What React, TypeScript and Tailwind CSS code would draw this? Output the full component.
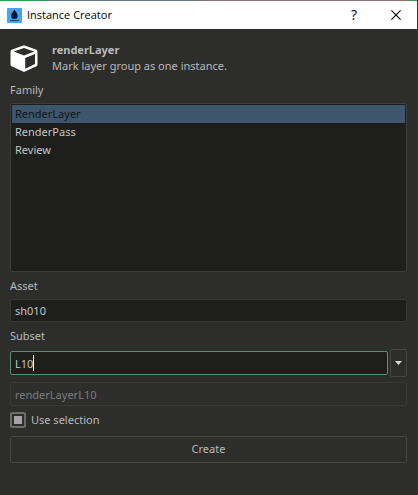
import { useState } from "react";

function AppIcon() {
  return (
    <svg className="size-[15px] shrink-0" viewBox="0 0 15 15" aria-hidden="true">
      <rect width="15" height="15" rx="1" fill="#4aa3ee" />
      <path d="M7.4 1.6C6.6 3.4 4.2 5 4.2 7.8c0 1.3.5 2.3 1.3 3h3.8c.8-.7 1.3-1.7 1.3-3C10.6 5 8.2 3.4 7.4 1.6z" fill="#0b1622" />
      <path d="M3 12.5h9" stroke="#17456f" strokeWidth="1" />
    </svg>
  );
}

function CubeIcon() {
  return (
    <svg className="h-[27px] w-7 shrink-0" viewBox="0 0 28 27" aria-hidden="true">
      <path
        fillRule="evenodd"
        d="M14 .3 26.4 4.7Q27.5 5.2 27.5 6.4V19.6Q27.5 20.7 26.5 21.3L15 26.6Q14 27 13 26.6L1.5 21.3Q.5 20.7.5 19.6V6.4Q.5 5.2 1.6 4.7ZM14 3 3.8 6.4 14 10.5 24.2 6.4ZM15.2 13V23.7L25 19.1V9Z"
        fill="#fff"
      />
    </svg>
  );
}

const field =
  "block w-full min-w-0 rounded-xs border px-1 text-[11px] outline-none";

export default function App() {
  const [family, setFamily] = useState("RenderLayer");
  const [asset, setAsset] = useState("sh010");
  const [subset, setSubset] = useState("L10");

  return (
    <div className="flex min-h-screen flex-col border-r border-[#3a3637] bg-[#2d2d2b] font-['Noto_Sans','Open_Sans',sans-serif] text-[11px] text-[#b9babb]">
      <div className="flex h-px">
        <div className="w-11 bg-[#2f9e49]" />
        <div className="flex-1 bg-[#66757f]" />
        <div className="w-1/2 bg-[#8c7378]" />
        <div className="w-2 bg-[#2f9e49]" />
      </div>
      <header className="flex h-7 items-center bg-white pl-[7px] text-black">
        <AppIcon />
        <h1 className="ml-[5px] flex-1 font-['Open_Sans',sans-serif]">Instance Creator</h1>
        <button type="button" aria-label="Help" className="flex h-7 w-[42px] items-center justify-center font-['Open_Sans',sans-serif] text-sm">
          ?
        </button>
        <button type="button" aria-label="Close" className="flex h-7 w-[42px] items-center justify-center">
          <svg className="size-[10px]" viewBox="0 0 10 10" aria-hidden="true">
            <path d="M.4.4 9.6 9.6M9.6.4.4 9.6" stroke="#000" strokeWidth="1.1" />
          </svg>
        </button>
      </header>

      <main className="flex flex-col px-[10px] pt-3">
        <div className="flex items-center gap-[14px] pt-px">
          <CubeIcon />
          <div className="leading-4">
            <h2 className="font-bold">renderLayer</h2>
            <p>Mark layer group as one instance.</p>
          </div>
        </div>

        <label htmlFor="family" className="mt-[7px] leading-[18px]">Family</label>
        <select
          id="family"
          size={9}
          value={family}
          onChange={(e) => setFamily(e.target.value)}
          className="mt-1 block h-[169px] w-full appearance-none overflow-hidden rounded-xs border border-[#3b3d3e] bg-[#1e1e1c] p-px text-[11px] text-[#c4c5c6] outline-none"
        >
          {["RenderLayer", "RenderPass", "Review"].map((name) => (
            <option
              key={name}
              className="h-[18px] min-h-[18px] px-[3px] pt-px pb-0 leading-[18px] checked:bg-[#3d566d] checked:bg-linear-to-r checked:from-[#3d566d] checked:to-[#3d566d] checked:text-[#10151b]"
            >
              {name}
            </option>
          ))}
        </select>

        <label htmlFor="asset" className="mt-[5px] leading-[18px]">Asset</label>
        <input
          id="asset"
          value={asset}
          onChange={(e) => setAsset(e.target.value)}
          className={`${field} mt-1 h-[23px] border-[#373839] bg-[#1e1e1c] text-[#c4c5c6]`}
        />

        <label htmlFor="subset" className="mt-[5px] leading-[18px]">Subset</label>
        <div className="mt-1 flex items-center gap-[2px]">
          <div className="relative min-w-0 flex-1">
            <input
              id="subset"
              value={subset}
              onChange={(e) => setSubset(e.target.value)}
              className={`${field} h-6 border-[#5f8a78] bg-[#1e1e1c] text-[#c4c5c6] caret-transparent`}
            />
            <span className="absolute top-1 left-[23px] h-4 w-px bg-white" />
          </div>
          <button
            type="button"
            aria-label="Choose subset"
            className="flex h-7 w-[17px] items-center justify-center rounded-xs border border-[#434546]"
          >
            <svg className="h-1 w-[7px]" viewBox="0 0 7 4" aria-hidden="true">
              <path d="M0 0h7L3.5 4z" fill="#d5d6d7" />
            </svg>
          </button>
        </div>
        <input
          aria-label="Result name"
          value="renderLayerL10"
          disabled
          className={`${field} mt-[5px] h-6 border-[#383939] bg-[#2d2d2b] text-[#7c7d7e]`}
        />

        <label className="mt-[5px] flex items-center gap-[5px] leading-[18px]">
          <input
            type="checkbox"
            defaultChecked
            className="size-4 appearance-none rounded-xs border-2 border-[#6c6c6d] bg-[#2d2d2b] bg-clip-content p-[2px] checked:bg-[#a8a2a6]"
          />
          Use selection
        </label>
        <button type="button" className="mt-[7px] h-[27px] w-full rounded-xs border border-[#434546]">
          Create
        </button>
      </main>
    </div>
  );
}
